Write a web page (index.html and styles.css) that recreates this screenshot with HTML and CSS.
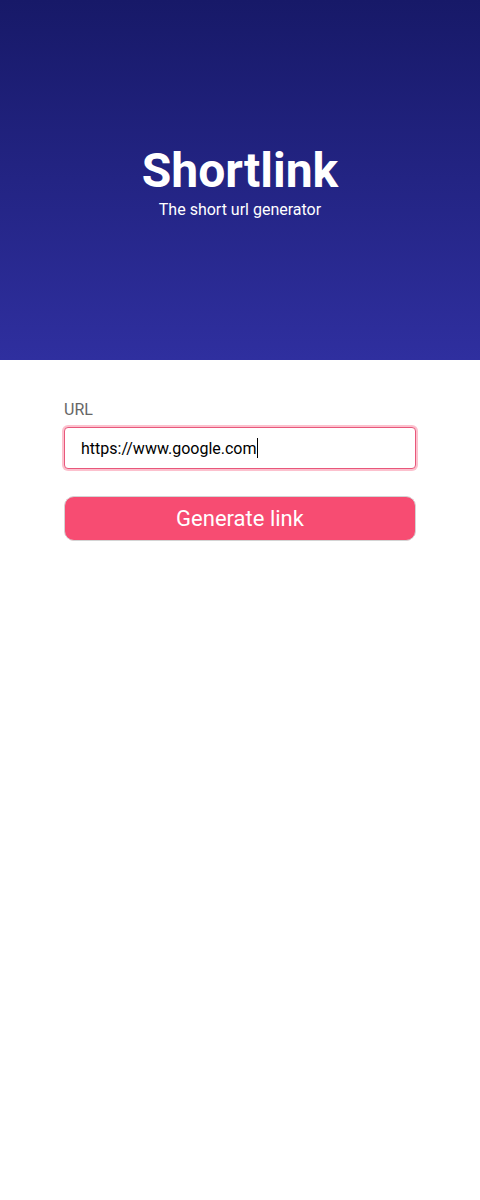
FILE: index.html
```html
<!DOCTYPE html>
<html>
<head>
<meta charset="utf-8">
<link rel="stylesheet" href="styles.css">
</head>
<body>
<header class="hero">
  <h1 class="title">Shortlink</h1>
  <p class="subtitle">The short url generator</p>
</header>
<main class="content">
  <form class="form">
    <label class="label" for="url">URL</label>
    <div class="field">
      <input class="input" id="url" type="text" value="https://www.google.com" autofocus>
      <span class="caret"></span>
    </div>
    <button class="button" type="button">Generate link</button>
  </form>
</main>
</body>
</html>
```
FILE: styles.css
```css
html, body {
  margin: 0;
  padding: 0;
  background: #ffffff;
  font-family: Roboto, "Liberation Sans", Arial, sans-serif;
}
.hero {
  height: 360px;
  background: linear-gradient(to bottom, #171968 0%, #2f2f9f 100%);
  display: flex;
  flex-direction: column;
  align-items: center;
  justify-content: center;
  color: #ffffff;
  padding-top: 4px;
  box-sizing: border-box;
}
.title {
  margin: 0;
  font-size: 48px;
  font-weight: 700;
  line-height: 52px;
}
.subtitle {
  margin: 3px 0 0;
  font-size: 16px;
  line-height: 20px;
}
.content {
  padding: 40px 64px;
}
.form {
  display: flex;
  flex-direction: column;
}
.label {
  font-size: 16px;
  color: #666666;
  line-height: 20px;
  margin-bottom: 7px;
}
.field {
  height: 42px;
  box-sizing: border-box;
  border: 1px solid #e8577b;
  border-radius: 4px;
  padding: 0 16px;
  display: flex;
  align-items: center;
  box-shadow: 0 0 0 2px rgba(247, 76, 114, 0.35);
  background: #ffffff;
}
.input {
  field-sizing: content;
  min-width: 0;
  border: none;
  padding: 0;
  margin: 0;
  font-family: inherit;
  font-size: 16px;
  color: #000000;
  outline: none;
  background: transparent;
  caret-color: transparent;
}
.caret {
  width: 1px;
  height: 20px;
  background: #000000;
  flex: none;
}
.button {
  margin-top: 27px;
  height: 45px;
  border: 1px solid #d4d4d4;
  border-radius: 10px;
  background: #f74c72;
  color: #ffffff;
  font-family: inherit;
  font-size: 22px;
  cursor: pointer;
}
```
